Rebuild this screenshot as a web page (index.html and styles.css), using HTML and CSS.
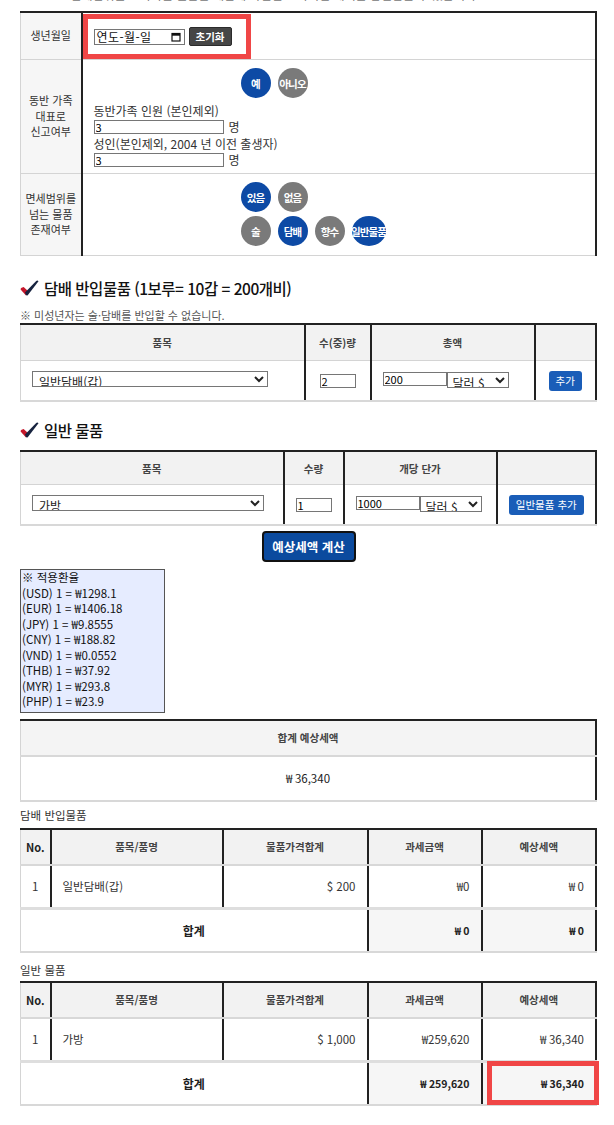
FILE: index.html
```html
<!DOCTYPE html>
<html lang="ko">
<head>
    <meta charset="UTF-8">
    <meta name="viewport" content="width=device-width, initial-scale=1.0">
    <title>여행자 휴대품 예상세액 조회</title>
    <link rel="stylesheet" href="styles.css">
</head>
<body>
    <div class="wrap">
        <p class="intro">※ 면세범위를 초과하는 물품은 세관에 자진신고 하시면 세액을 감면받을 수 있습니다.</p>

        <table class="form">
            <colgroup><col class="c-label"><col></colgroup>
            <tr class="r-birth">
                <th>생년월일</th>
                <td class="birth">
                    <div class="mark">
                        <span class="date-field">연도-월-일
                            <svg width="10" height="10" viewBox="0 0 10 10"><rect x="1" y="1.5" width="8" height="7.5" fill="none" stroke="#111" stroke-width="1.2"/><rect x="1" y="1.5" width="8" height="2.2" fill="#111"/></svg>
                        </span>
                        <button class="btn-dark">초기화</button>
                    </div>
                </td>
            </tr>
            <tr class="r-family">
                <th>동반 가족<br>대표로<br>신고여부</th>
                <td class="pad">
                    <div class="choices">
                        <span class="dot on">예</span>
                        <span class="dot">아니오</span>
                    </div>
                    <p class="field-label">동반가족 인원 (본인제외)</p>
                    <div class="count"><input type="text" value="3"> 명</div>
                    <p class="field-label">성인(본인제외, 2004 년 이전 출생자)</p>
                    <div class="count"><input type="text" value="3"> 명</div>
                </td>
            </tr>
            <tr class="r-over">
                <th>면세범위를<br>넘는 물품<br>존재여부</th>
                <td class="pad">
                    <div class="choices">
                        <span class="dot on">있음</span>
                        <span class="dot">없음</span>
                    </div>
                    <div class="choices">
                        <span class="dot">술</span>
                        <span class="dot on">담배</span>
                        <span class="dot">향수</span>
                        <span class="dot on wide">일반물품</span>
                    </div>
                </td>
            </tr>
        </table>

        <h2 class="title">
            <svg class="check" width="19" height="16" viewBox="0 0 19 16"><path d="M0.6 9.6 Q0.4 8.4 1.6 7.8 L3.6 6.9 L7.4 10.6 L6 15.4 Z" fill="#c4162a"/><path d="M5 12.4 L16.2 0.9 Q17.6 0.1 18.5 1.3 L7.9 15 Q6.9 16 5.9 15.1 Z" fill="#17233f"/></svg>
            담배 반입물품 (1보루= 10갑 = 200개비)
        </h2>
        <p class="note">※ 미성년자는 술·담배를 반입할 수 없습니다.</p>

        <table class="entry tobacco">
            <colgroup><col class="t1"><col class="t2"><col class="t3"><col class="t4"></colgroup>
            <tr>
                <th>품목</th>
                <th>수(중)량</th>
                <th>총액</th>
                <th></th>
            </tr>
            <tr>
                <td><select class="item"><option>일반담배(갑)</option></select></td>
                <td class="mid"><input class="qty" type="text" value="2"></td>
                <td><input class="price" type="text" value="200"><select class="cur"><option>달러 $</option></select></td>
                <td class="mid"><button class="btn-blue">추가</button></td>
            </tr>
        </table>

        <h2 class="title second">
            <svg class="check" width="19" height="16" viewBox="0 0 19 16"><path d="M0.6 9.6 Q0.4 8.4 1.6 7.8 L3.6 6.9 L7.4 10.6 L6 15.4 Z" fill="#c4162a"/><path d="M5 12.4 L16.2 0.9 Q17.6 0.1 18.5 1.3 L7.9 15 Q6.9 16 5.9 15.1 Z" fill="#17233f"/></svg>
            일반 물품
        </h2>

        <table class="entry general">
            <colgroup><col class="g1"><col class="g2"><col class="g3"><col class="g4"></colgroup>
            <tr>
                <th>품목</th>
                <th>수량</th>
                <th>개당 단가</th>
                <th></th>
            </tr>
            <tr>
                <td><select class="item"><option>가방</option></select></td>
                <td class="mid"><input class="qty" type="text" value="1"></td>
                <td><input class="price" type="text" value="1000"><select class="cur"><option>달러 $</option></select></td>
                <td class="mid"><button class="btn-blue">일반물품 추가</button></td>
            </tr>
        </table>

        <button class="btn-calc">예상세액 계산</button>

        <div class="rates">
            ※ 적용환율<br>
            (USD) 1 = ₩1298.1<br>
            (EUR) 1 = ₩1406.18<br>
            (JPY) 1 = ₩9.8555<br>
            (CNY) 1 = ₩188.82<br>
            (VND) 1 = ₩0.0552<br>
            (THB) 1 = ₩37.92<br>
            (MYR) 1 = ₩293.8<br>
            (PHP) 1 = ₩23.9
        </div>

        <table class="total">
            <tr><th>합계 예상세액</th></tr>
            <tr><td>₩ 36,340</td></tr>
        </table>

        <p class="sub">담배 반입물품</p>
        <table class="result">
            <colgroup><col class="n1"><col class="n2"><col class="n3"><col class="n4"><col class="n5"></colgroup>
            <tr>
                <th class="no">No.</th>
                <th>품목/품명</th>
                <th>물품가격합계</th>
                <th>과세금액</th>
                <th>예상세액</th>
            </tr>
            <tr class="line">
                <td class="mid">1</td>
                <td>일반담배(갑)</td>
                <td class="num">$ 200</td>
                <td class="num">₩0</td>
                <td class="num">₩ 0</td>
            </tr>
            <tr class="sum">
                <th colspan="3">합계</th>
                <td class="num">₩ 0</td>
                <td class="num">₩ 0</td>
            </tr>
        </table>

        <p class="sub second">일반 물품</p>
        <table class="result">
            <colgroup><col class="n1"><col class="n2"><col class="n3"><col class="n4"><col class="n5"></colgroup>
            <tr>
                <th class="no">No.</th>
                <th>품목/품명</th>
                <th>물품가격합계</th>
                <th>과세금액</th>
                <th>예상세액</th>
            </tr>
            <tr class="line">
                <td class="mid">1</td>
                <td>가방</td>
                <td class="num">$ 1,000</td>
                <td class="num">₩259,620</td>
                <td class="num">₩ 36,340</td>
            </tr>
            <tr class="sum">
                <th colspan="3">합계</th>
                <td class="num">₩ 259,620</td>
                <td class="num hl">₩ 36,340<span class="hl-box"></span></td>
            </tr>
        </table>
    </div>
</body>
</html>
```

FILE: styles.css
```css
body {
    margin: 0;
    font-family: "Noto Sans CJK KR", "Liberation Sans", sans-serif;
    font-size: 12px;
    color: #333;
    background-color: #fff;
}
.wrap {
    width: 577px;
    margin-left: 20px;
}
.intro {
    margin: -12px 0 0;
    padding-left: 35px;
    line-height: 14px;
    color: #777;
    white-space: nowrap;
    overflow: hidden;
}
table {
    width: 100%;
    border-collapse: collapse;
    table-layout: fixed;
    border-top: 2px solid #222;
    border-left: 1px solid #d4d4d4;
    border-right: 2px solid #222;
}
th, td {
    padding: 0;
}
input, select, button {
    font-family: inherit;
}

/* top form */
.form {
    margin-top: 9px;
}
.c-label {
    width: 61px;
}
.form th {
    background-color: #f6f6f6;
    border-right: 2px solid #222;
    border-bottom: 1px solid #d4d4d4;
    font-size: 11px;
    font-weight: normal;
    line-height: 15.5px;
    color: #333;
}
.form td {
    border-bottom: 1px solid #d4d4d4;
    vertical-align: top;
}
.r-birth th {
    height: 46px;
}
.r-family th {
    height: 113px;
}
.r-over th {
    height: 81px;
}
.birth {
    padding: 1px 0 0 0;
}
.mark {
    display: flex;
    align-items: center;
    gap: 4px;
    width: 168px;
    height: 45px;
    box-sizing: border-box;
    border: 5px solid #f04646;
    padding-left: 6px;
}
.date-field {
    display: flex;
    align-items: center;
    justify-content: space-between;
    width: 91px;
    height: 16px;
    box-sizing: border-box;
    border: 1px solid #767676;
    padding: 0 3px 0 2px;
    font-size: 12px;
    color: #111;
    letter-spacing: 0.4px;
}
.btn-dark {
    width: 43px;
    height: 19px;
    padding: 0;
    border: 1px solid #2b2b2b;
    border-radius: 2px;
    background-color: #464646;
    color: #fff;
    font-size: 10.5px;
    font-weight: bold;
}
.pad {
    padding: 8px 0 0 11px;
}
.choices {
    display: flex;
    gap: 7px;
    padding-left: 147px;
}
.choices + .choices {
    margin-top: 4px;
}
.dot {
    display: flex;
    align-items: center;
    justify-content: center;
    width: 30px;
    height: 30px;
    border-radius: 50%;
    background-color: #7a7a7a;
    color: #fff;
    font-size: 10.5px;
    font-weight: bold;
    letter-spacing: -0.9px;
    white-space: nowrap;
}
.dot.on {
    background-color: #0d4aa5;
}
.dot.wide {
    width: 34px;
}
.field-label {
    margin: 6px 0 0;
    line-height: 14px;
}
.count + .field-label {
    margin-top: 3px;
}
.count {
    display: flex;
    align-items: center;
    gap: 5px;
    margin-top: 2px;
    line-height: 14px;
}
.count input {
    width: 130px;
    height: 14px;
    box-sizing: border-box;
    border: 1px solid #767676;
    padding: 0 1px;
    font-size: 11px;
}

/* section titles */
.title {
    display: flex;
    align-items: center;
    gap: 5px;
    margin: 20px 0 0;
    font-size: 15.5px;
    font-weight: 500;
    line-height: 24px;
    color: #111;
    letter-spacing: -0.5px;
}
.title.second {
    margin-top: 16px;
}
.note {
    margin: 8px 0 0;
    font-size: 11px;
    line-height: 14px;
    color: #555;
}

/* entry tables */
.entry {
    margin-top: 1px;
}
.entry.general {
    margin-top: 8px;
}
.t1 { width: 284px; }
.t2 { width: 66px; }
.t3 { width: 164px; }
.g1 { width: 263px; }
.g2 { width: 60px; }
.g3 { width: 153px; }
.entry th {
    height: 35px;
    background-color: #f2f2f2;
    border-right: 2px solid #222;
    border-bottom: 1px solid #d4d4d4;
    font-size: 10.5px;
    font-weight: bold;
    color: #444;
}
.entry.general th {
    height: 32px;
}
.entry td {
    height: 39px;
    padding: 0 11px;
    border-right: 2px solid #222;
    border-bottom: 2px solid #d8d8d8;
    white-space: nowrap;
}
.mid {
    text-align: center;
}
.item {
    width: 236px;
    height: 16px;
    padding: 0 2px;
    border: 1px solid #767676;
    border-radius: 0;
    background-color: #fff;
    font-size: 12px;
    color: #222;
}
.general .item {
    width: 232px;
}
.qty {
    width: 36px;
    height: 14px;
    box-sizing: border-box;
    border: 1px solid #767676;
    padding: 0 1px;
    font-size: 11px;
}
.price {
    width: 64px;
    height: 14px;
    box-sizing: border-box;
    border: 1px solid #767676;
    padding: 0 1px;
    font-size: 11px;
    vertical-align: top;
}
.cur {
    width: 62px;
    height: 16px;
    padding: 0 1px;
    border: 1px solid #767676;
    border-radius: 0;
    background-color: #fff;
    font-size: 12px;
    color: #222;
    vertical-align: top;
}
.btn-blue {
    height: 20px;
    padding: 0 7px;
    border: none;
    border-radius: 3px;
    background-color: #1a5db8;
    color: #fff;
    font-size: 10.5px;
}
.btn-calc {
    display: block;
    width: 94px;
    height: 31px;
    margin: 5px auto 0;
    padding: 0;
    border: 2px solid #111;
    border-radius: 4px;
    background-color: #0b4a9e;
    color: #fff;
    font-size: 12.5px;
    font-weight: bold;
}

/* rates */
.rates {
    width: 145px;
    box-sizing: border-box;
    margin-top: 7px;
    padding: 0 1px 2px;
    border: 1px solid #555;
    background-color: #e6ecff;
    font-size: 11.5px;
    line-height: 15.5px;
    color: #111;
}

/* totals */
.total {
    margin-top: 6px;
}
.total th {
    height: 34px;
    background-color: #f4f4f4;
    border-bottom: 2px solid #d8d8d8;
    font-size: 10.5px;
    font-weight: bold;
    color: #444;
}
.total td {
    height: 43px;
    border-bottom: 2px solid #d8d8d8;
    text-align: center;
    font-size: 11.5px;
    color: #222;
}
.sub {
    margin: 6px 0 0;
    font-size: 11.5px;
    line-height: 14px;
    color: #333;
}
.sub.second {
    margin-top: 10px;
}
.result {
    margin-top: 6px;
}
.sub.second + .result {
    margin-top: 4px;
}
.n1 { width: 30px; }
.n2 { width: 172px; }
.n3 { width: 145px; }
.n4 { width: 114px; }
.result th {
    height: 34px;
    background-color: #f2f2f2;
    border-right: 2px solid #222;
    border-bottom: 2px solid #d8d8d8;
    font-size: 10.5px;
    font-weight: bold;
    color: #444;
}
.result th.no {
    font-size: 11px;
    color: #222;
}
.result td {
    height: 41px;
    padding: 0 11px;
    border-right: 2px solid #222;
    font-size: 11.5px;
    color: #333;
}
.result td.mid {
    padding: 0;
}
.result .line td {
    border-bottom: 3px solid #dedede;
}
.num {
    text-align: right;
}
.result .sum th {
    height: 40px;
    background-color: #fff;
    border-bottom: 2px solid #d8d8d8;
    font-size: 12px;
    color: #222;
}
.result .sum td {
    background-color: #f6f6f6;
    border-bottom: 2px solid #d8d8d8;
    font-size: 10.5px;
    font-weight: bold;
    color: #222;
}
.hl {
    position: relative;
}
.hl-box {
    position: absolute;
    left: 4px;
    right: -4px;
    top: -2px;
    bottom: -1px;
    border: 5px solid #f04646;
}
```
